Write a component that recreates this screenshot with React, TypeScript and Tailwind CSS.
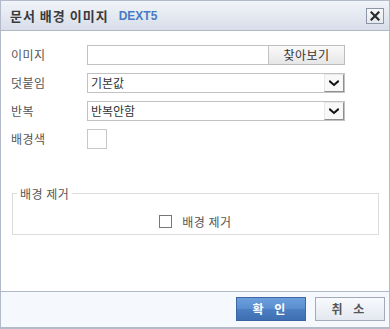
import React from "react";

const font = { fontFamily: '"Noto Sans CJK KR", "Noto Sans", sans-serif' };

function Chevron() {
  return (
    <svg width="10" height="7" viewBox="0 0 10 7">
      <path d="M1 1.5 L5 5 L9 1.5" fill="none" stroke="#111" strokeWidth="2" strokeLinecap="square" />
    </svg>
  );
}

function Select({ value }: { value: string }) {
  return (
    <div className="flex h-[20px] w-[258px] items-stretch border border-[#c2c2c2] bg-white">
      <div className="flex flex-1 items-center pl-[3px] text-[12px] leading-none text-[#333]">{value}</div>
      <div className="flex w-[20px] items-center justify-center border-b border-r border-l border-t border-b-[#8f8f8f] border-r-[#8f8f8f] border-l-[#e8e8e8] border-t-[#e8e8e8] bg-[#f8f8f8]">
        <Chevron />
      </div>
    </div>
  );
}

function Row({ label, children }: { label: string; children: React.ReactNode }) {
  return (
    <div className="flex h-[20px] items-center">
      <div className="w-[76px] text-[12px] leading-none tracking-[0.5px] text-[#555]">{label}</div>
      {children}
    </div>
  );
}

export default function App() {
  return (
    <div
      className="flex h-[329px] w-[390px] flex-col border border-b-2 border-[#b3bbca] bg-white"
      style={font}
    >
      {/* title bar */}
      <div className="flex h-[30px] items-center justify-between border-b border-[#aeb8c8] bg-gradient-to-b from-[#f1f4f9] to-[#d7dee9] pl-[9px] pr-[5px]">
        <div className="flex items-center gap-[10px]">
          <span className="text-[13px] font-bold leading-none tracking-[1px] text-[#3a3a3a]">문서 배경 이미지</span>
          <span
            className="text-[12px] font-bold leading-none text-[#4a7cc2]"
            style={{ fontFamily: '"Liberation Sans", Arial, sans-serif' }}
          >
            DEXT5
          </span>
        </div>
        <div className="flex h-[16px] w-[18px] items-center justify-center border border-[#8d96a6] bg-gradient-to-b from-[#f7f9fc] to-[#e3e8ef]">
          <svg width="10" height="10" viewBox="0 0 10 10">
            <path d="M1.5 1.5 L8.5 8.5 M8.5 1.5 L1.5 8.5" stroke="#2b2b2b" strokeWidth="2.2" strokeLinecap="square" />
          </svg>
        </div>
      </div>

      {/* body */}
      <div className="flex flex-1 flex-col pl-[10px] pt-[14px]">
        <div className="flex flex-col gap-[8px]">
          <Row label="이미지">
            <div className="h-[20px] w-[182px] border border-[#c2c2c2] bg-white" />
            <div className="flex h-[20px] w-[76px] items-center justify-center border border-l-0 border-[#bcbcbc] bg-gradient-to-b from-[#fafafa] to-[#e6e6e6] text-[12px] leading-none tracking-[0.5px] text-[#333]">
              찾아보기
            </div>
          </Row>
          <Row label="덧붙임">
            <Select value="기본값" />
          </Row>
          <Row label="반복">
            <Select value="반복안함" />
          </Row>
          <Row label="배경색">
            <div className="h-[20px] w-[20px] border border-[#c8c8c8] bg-white" />
          </Row>
        </div>

        <fieldset className="ml-[1px] mt-[37px] w-[367px] border border-[#dcdcdc] px-0 pb-[6px] pt-[14px]">
          <legend className="ml-[4px] px-[3px] text-[12px] leading-[15px] tracking-[0.5px] text-[#555]">배경 제거</legend>
          <div className="flex items-center justify-center gap-[10px]">
            <div className="h-[13px] w-[13px] border border-[#777] bg-white" />
            <span className="text-[12px] leading-none tracking-[0.5px] text-[#555]">배경 제거</span>
          </div>
        </fieldset>
      </div>

      {/* footer */}
      <div className="flex h-[36px] items-start justify-end gap-[9px] border-t border-[#b0b9c9] bg-[#f5f8fc] pr-[4px] pt-[5px]">
        <div className="flex h-[24px] w-[70px] items-center justify-center border border-[#3c66a3] bg-[linear-gradient(#6c9fdc,#5a8dcf_50%,#4c7ec2_51%,#3f6fb3)] text-[12px] font-bold leading-none tracking-[4px] text-white">
          확 인
        </div>
        <div className="flex h-[24px] w-[70px] items-center justify-center border border-[#a3abbb] bg-gradient-to-b from-[#f8fafd] to-[#e3e8f0] text-[12px] font-bold leading-none tracking-[4px] text-[#555]">
          취 소
        </div>
      </div>
    </div>
  );
}
